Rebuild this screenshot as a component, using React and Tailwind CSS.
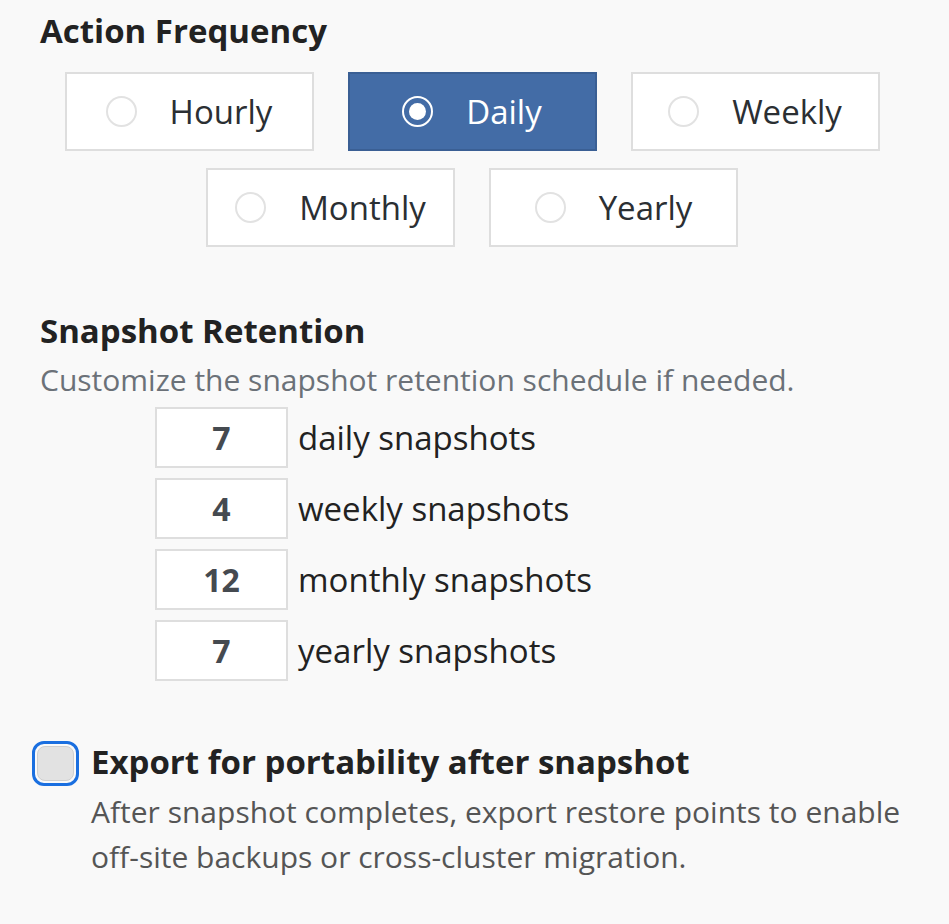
import { useState } from "react";

const FREQS = ["Hourly", "Daily", "Weekly", "Monthly", "Yearly"];

const RETENTION = [
  { n: 7, label: "daily snapshots" },
  { n: 4, label: "weekly snapshots" },
  { n: 12, label: "monthly snapshots" },
  { n: 7, label: "yearly snapshots" },
];

function FreqButton({ label, active, onClick }) {
  return (
    <button
      onClick={onClick}
      className={`w-[249px] h-[79px] flex items-center justify-center gap-[33px] border-2 ${
        active ? "bg-[#436ca6] border-[#3a5f94] text-white" : "bg-white border-[#dedede] text-[#2b2f33]"
      }`}
    >
      {active ? (
        <span className="w-[31px] h-[31px] rounded-full border-2 border-white flex items-center justify-center">
          <span className="w-[17px] h-[17px] rounded-full bg-white" />
        </span>
      ) : (
        <span className="w-[31px] h-[31px] rounded-full border-2 border-[#e2e2e2] bg-white" />
      )}
      <span className="text-[33px] leading-none">{label}</span>
    </button>
  );
}

export default function App() {
  const [freq, setFreq] = useState("Daily");
  const [exportOn, setExportOn] = useState(false);

  return (
    <div className="min-h-screen bg-[#f9f9f9] pl-10 pr-[45px] pt-[8px] font-['Open_Sans',sans-serif]">
      <h2 className="text-[33px] font-bold text-[#222] leading-[45px]">Action Frequency</h2>

      <div className="mt-[19px] flex flex-wrap justify-center gap-x-[34px] gap-y-[17px]">
        {FREQS.map((f) => (
          <FreqButton key={f} label={f} active={freq === f} onClick={() => setFreq(f)} />
        ))}
      </div>

      <h2 className="mt-[61px] text-[33px] font-bold text-[#222] leading-[45px]">Snapshot Retention</h2>
      <p className="mt-[7px] text-[30px] text-[#6b7178] leading-[40px]">
        Customize the snapshot retention schedule if needed.
      </p>

      <div className="mt-[7px] pl-[115px] flex flex-col gap-[10px]">
        {RETENTION.map((r) => (
          <div key={r.label} className="flex items-center">
            <div className="w-[133px] h-[61px] border-2 border-[#dedede] bg-white flex items-center justify-center text-[32px] font-bold text-[#454a50]">
              {r.n}
            </div>
            <span className="ml-[10px] text-[33px] text-[#222]">{r.label}</span>
          </div>
        ))}
      </div>

      <div className="mt-[58px] -ml-2 flex items-start gap-[12px]">
        <button
          onClick={() => setExportOn((v) => !v)}
          className="mt-[2px] w-[47px] h-[45px] shrink-0 rounded-[12px] border-[3px] border-[#1a6fe0] p-[2px]"
        >
          <span className={`block w-full h-full rounded-[8px] border border-[#cfcfcf] ${exportOn ? "bg-[#1a6fe0]" : "bg-[#e2e2e2]"}`} />
        </button>
        <div>
          <div className="text-[33px] font-bold text-[#222] leading-[46px]">Export for portability after snapshot</div>
          <p className="mt-[4px] text-[30px] text-[#555] leading-[45px]">
            After snapshot completes, export restore points to enable
            <br />
            off-site backups or cross-cluster migration.
          </p>
        </div>
      </div>
    </div>
  );
}
